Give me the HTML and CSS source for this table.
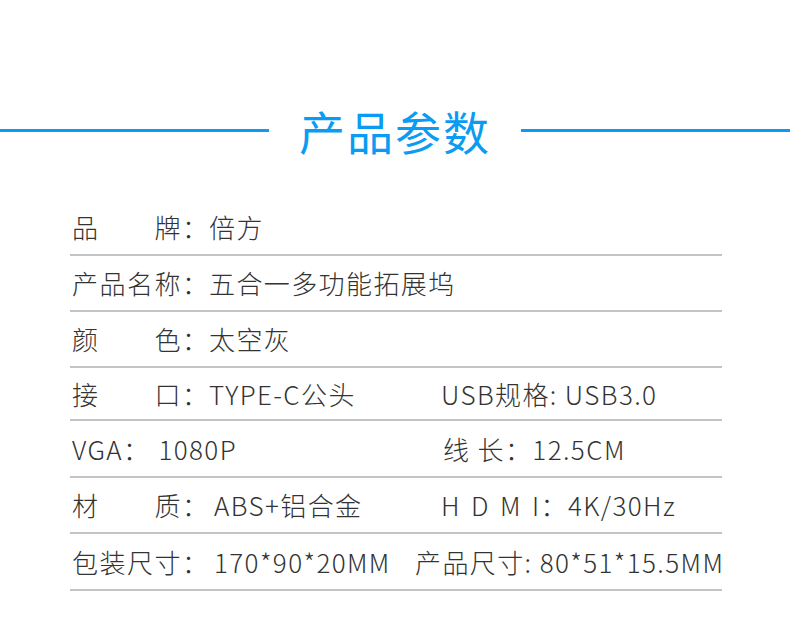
FILE: index.html
```html
<!DOCTYPE html>
<html lang="zh-CN">
<head>
<meta charset="utf-8">
<title>产品参数</title>
<link rel="stylesheet" href="styles.css">
</head>
<body>
<div class="page">
  <div class="header">
    <div class="hline"></div>
    <h1 class="title">产品参数</h1>
    <div class="hline"></div>
  </div>
  <div class="table">
    <div class="row">
      <div class="cell">
        <span class="label"><span>品</span><span>牌</span></span><span class="colon">：</span><span class="val">倍方</span>
      </div>
    </div>
    <div class="row">
      <div class="cell">
        <span class="label"><span>产</span><span>品</span><span>名</span><span>称</span></span><span class="colon">：</span><span class="val">五合一多功能拓展坞</span>
      </div>
    </div>
    <div class="row">
      <div class="cell">
        <span class="label"><span>颜</span><span>色</span></span><span class="colon">：</span><span class="val">太空灰</span>
      </div>
    </div>
    <div class="row short">
      <div class="cell left">
        <span class="label"><span>接</span><span>口</span></span><span class="colon">：</span><span class="val">TYPE-C公头</span>
      </div>
      <div class="cell right">USB规格: USB3.0</div>
    </div>
    <div class="row tall">
      <div class="cell left">
        <span>VGA：</span><span class="val vga">1080P</span>
      </div>
      <div class="cell right r2">线 长：12.5CM</div>
    </div>
    <div class="row">
      <div class="cell left">
        <span class="label"><span>材</span><span>质</span></span><span class="colon">：</span><span class="val pad2">ABS+铝合金</span>
      </div>
      <div class="cell right r2 hdmi">H D M I：4K/30Hz</div>
    </div>
    <div class="row tall">
      <div class="cell left wide">
        <span class="label"><span>包</span><span>装</span><span>尺</span><span>寸</span></span><span class="colon">：</span><span class="val pad2">170*90*20MM</span>
      </div>
      <div class="cell right">产品尺寸: 80*51*15.5MM</div>
    </div>
  </div>
</div>
</body>
</html>
```

FILE: styles.css
```css
* { box-sizing: border-box; }
html, body { margin: 0; padding: 0; background: #ffffff; }
body {
  font-family: "Noto Sans CJK SC", "Noto Sans", sans-serif;
  color: #333333;
  width: 790px;
  height: 642px;
  overflow: hidden;
}
.page { width: 790px; }
.header {
  display: flex;
  align-items: center;
  height: 60px;
  margin-top: 100px;
}
.hline {
  flex: 1;
  height: 3px;
  background: #0a9cf2;
}
.title {
  margin: 0 30px;
  font-size: 46px;
  font-weight: 400;
  letter-spacing: 2px;
  color: #0a9cf2;
  line-height: 60px;
}
.table {
  margin: 40px 0 0 70px;
  width: 652px;
}
.row {
  display: flex;
  align-items: center;
  height: 56px;
  border-bottom: 2px solid #c4c4c4;
  font-size: 26px;
  font-weight: 300;
  letter-spacing: 1.4px;
  line-height: 1;
}
.row.short { height: 53px; }
.row.tall { height: 57px; }
.cell {
  display: flex;
  align-items: center;
  padding-left: 2px;
  white-space: nowrap;
  flex-shrink: 0;
}
.left { width: 371px; }
.wide { width: 345px; }
.right { padding-left: 0; }
.label {
  display: inline-flex;
  justify-content: space-between;
  width: 110px;
}
.colon { width: 27px; }
.pad2 { padding-left: 5px; }
.vga { padding-left: 8px; }
.r2 { padding-left: 2px; }
.hdmi { word-spacing: 3px; padding-left: 0; }
```
